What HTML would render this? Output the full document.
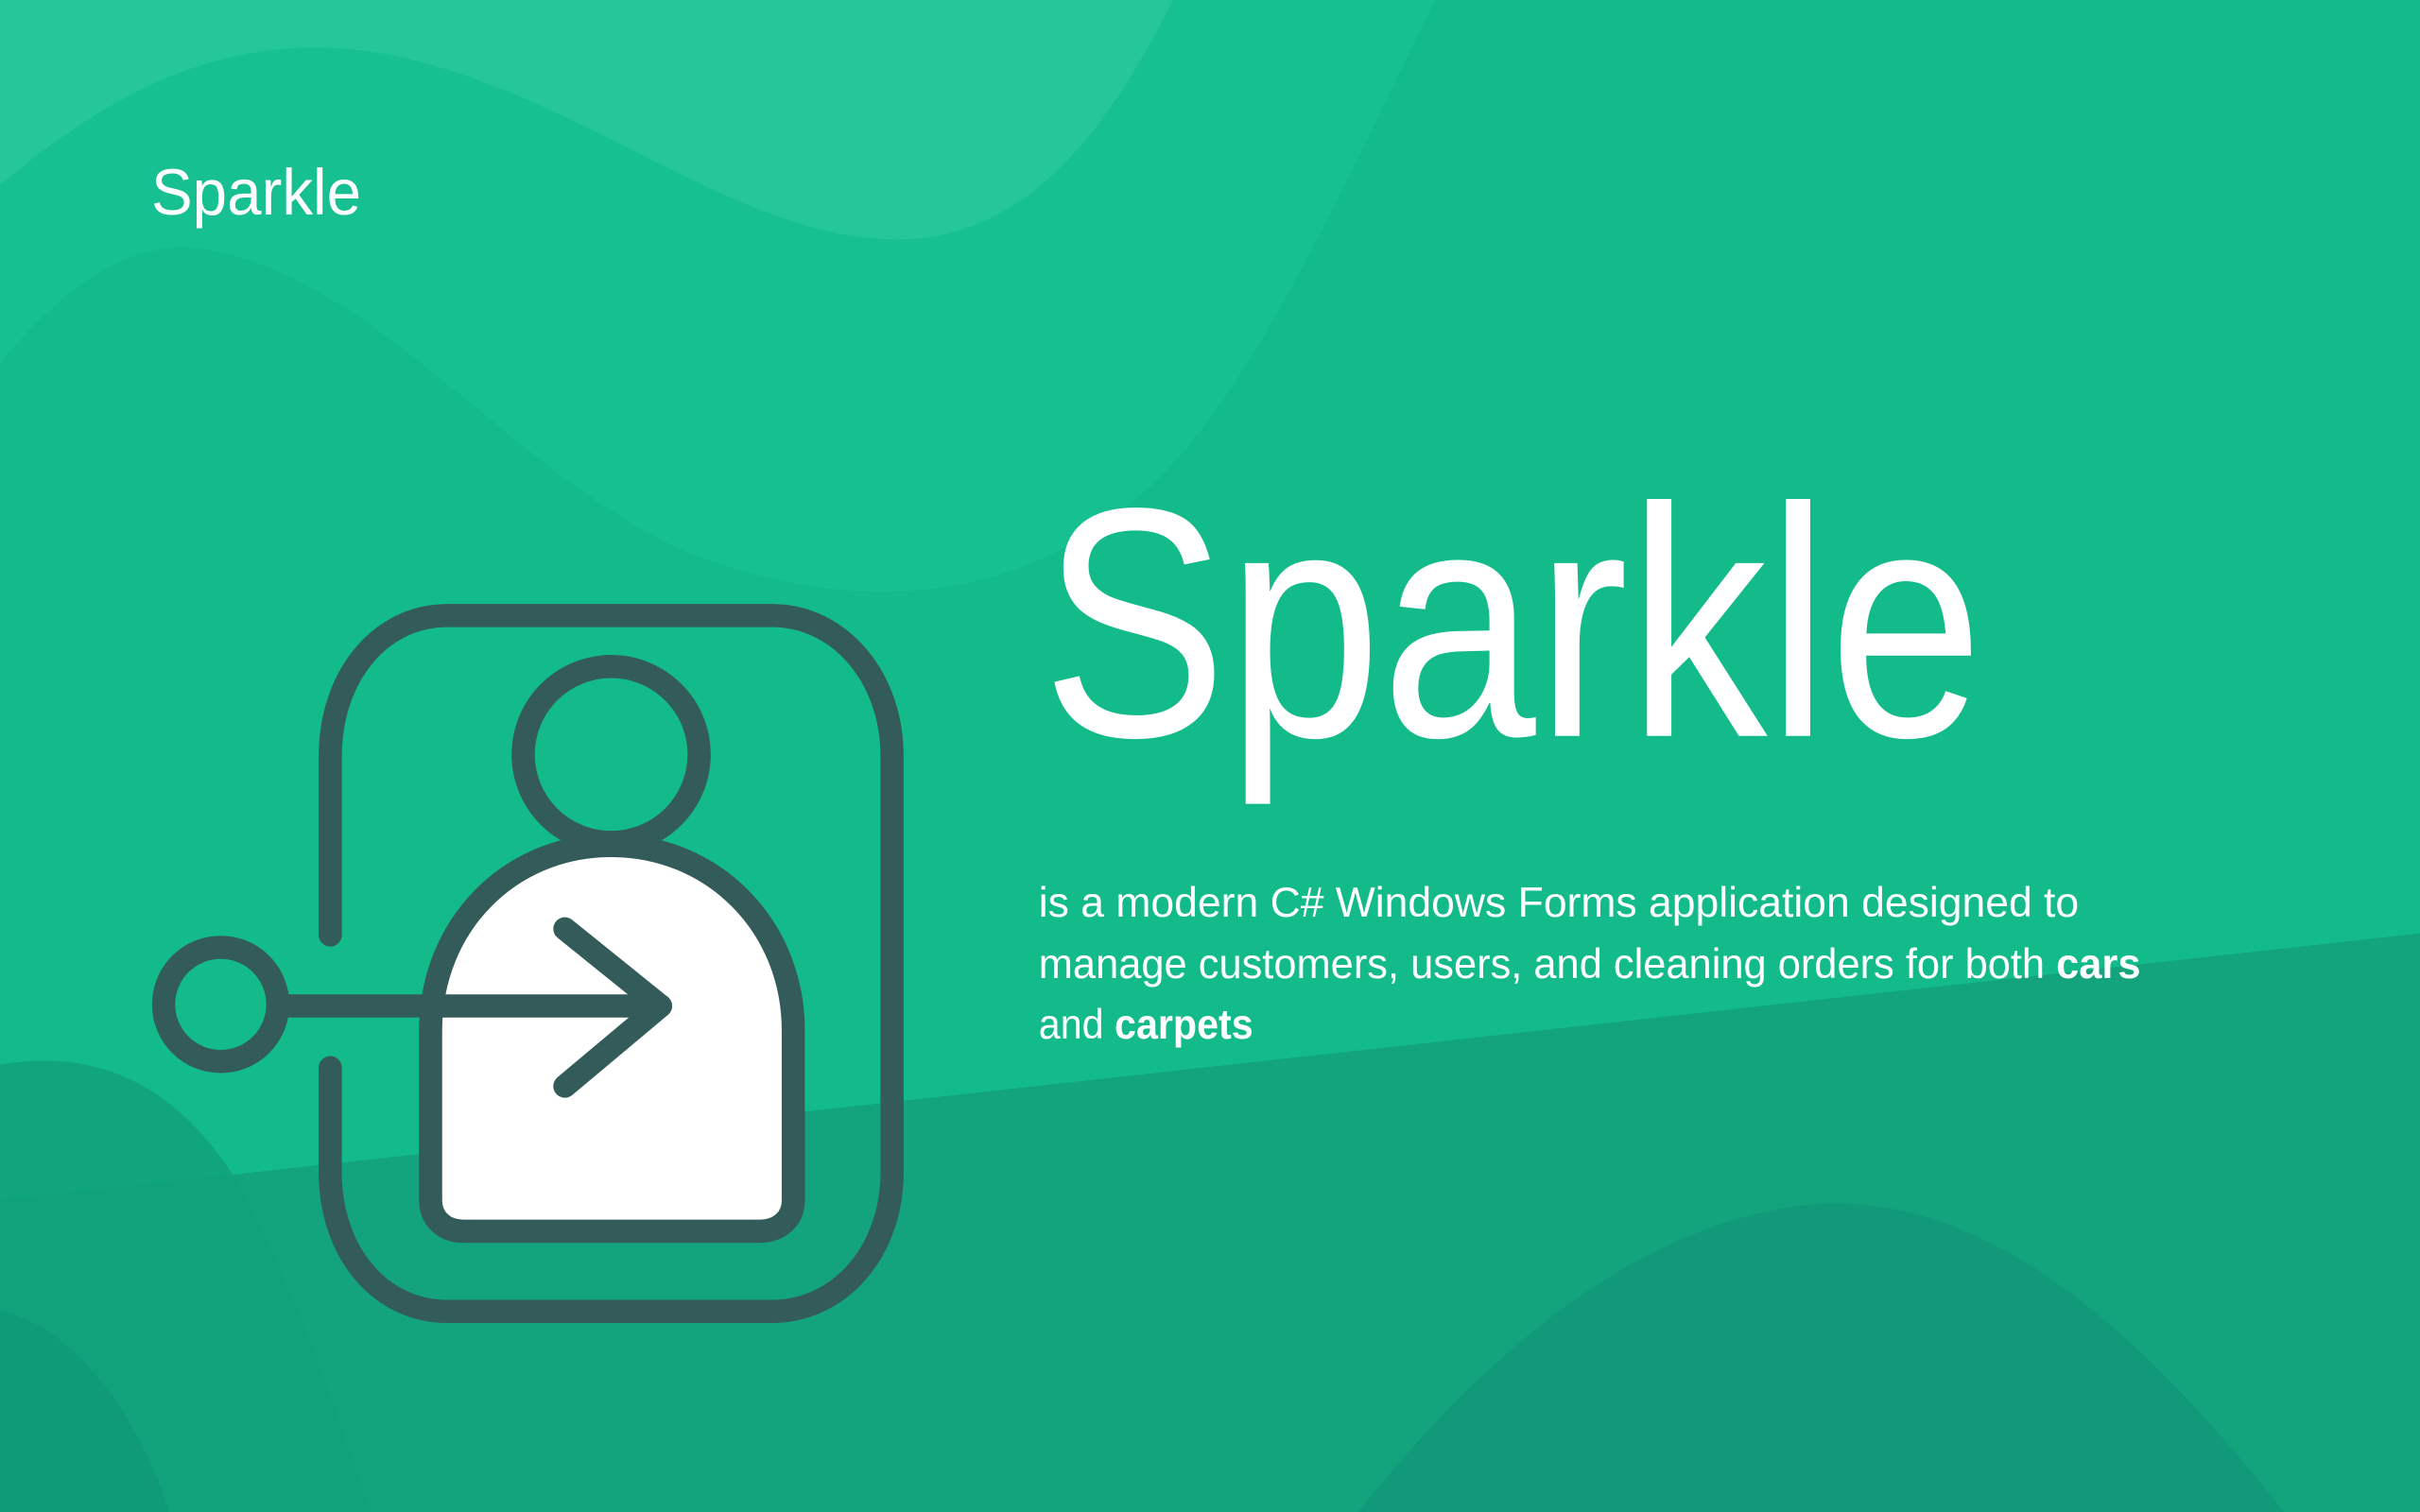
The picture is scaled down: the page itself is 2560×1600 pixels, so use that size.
<!DOCTYPE html>
<html><head><meta charset="utf-8"><style>
html,body{margin:0;padding:0;width:2560px;height:1600px;overflow:hidden;background:#13bb8a}
svg{display:block}
</style></head><body>
<svg width="2560" height="1600" viewBox="0 0 1568 980" preserveAspectRatio="none">
<rect width="1568" height="980" fill="#13bb8a"/>
<path d="M0 0 H930 C870 120 810 260 740 320 C660 390 560 400 450 360 C330 310 240 170 120 160 C70 160 30 200 0 235 Z" fill="#17c090"/>
<path d="M0 0 H760 C720 80 670 150 590 155 C480 160 380 60 250 35 C140 15 60 70 0 120 Z" fill="#26c69b"/>
<path d="M0 778 L1568 605 V980 H0 Z" fill="#13a47d"/>
<path d="M0 690 C60 680 110 700 150 760 C190 830 220 920 240 980 H0 Z" fill="#11a07a" opacity="0.8"/>
<path d="M0 850 C50 860 90 920 110 980 H0 Z" fill="#0f9a78"/>
<path d="M880 980 C960 880 1060 790 1180 780 C1300 775 1400 880 1480 980 Z" fill="#11997a"/>
<text x="98" y="139" font-family="Liberation Sans, sans-serif" font-size="42" fill="#fff" textLength="136" lengthAdjust="spacingAndGlyphs">Sparkle</text>
<text x="675" y="477" font-family="Liberation Sans, sans-serif" font-size="212" fill="#fff" textLength="610" lengthAdjust="spacingAndGlyphs">Sparkle</text>
<g font-family="Liberation Sans, sans-serif" font-size="27" fill="#fff">
<text x="673" y="594" textLength="674" lengthAdjust="spacingAndGlyphs">is a modern C# Windows Forms application designed to</text>
<text x="673" y="634" textLength="714" lengthAdjust="spacingAndGlyphs">manage customers, users, and cleaning orders for both <tspan font-weight="bold">cars</tspan></text>
<text x="673" y="673" textLength="139" lengthAdjust="spacingAndGlyphs">and <tspan font-weight="bold">carpets</tspan></text>
</g>
<g fill="none" stroke="#335b5a" stroke-width="15" stroke-linecap="round" stroke-linejoin="round">
<path d="M214 606 V490 C214 440 245 399 290 399 H500 C545 399 578 440 578 490 V760 C578 810 545 850 500 850 H290 C245 850 214 810 214 760 V692"/>
<circle cx="143" cy="651" r="37"/>
<circle cx="396" cy="489" r="57"/>
<path d="M279 668 C279 600 330 548 396 548 C462 548 514 600 514 668 V778 C514 790 505 798 492 798 H300 C288 798 279 790 279 778 Z" fill="#fff"/>
<path d="M180 652 H428"/>
<path d="M366 602 L428 652 L366 704"/>
</g>
</svg>
</body></html>
